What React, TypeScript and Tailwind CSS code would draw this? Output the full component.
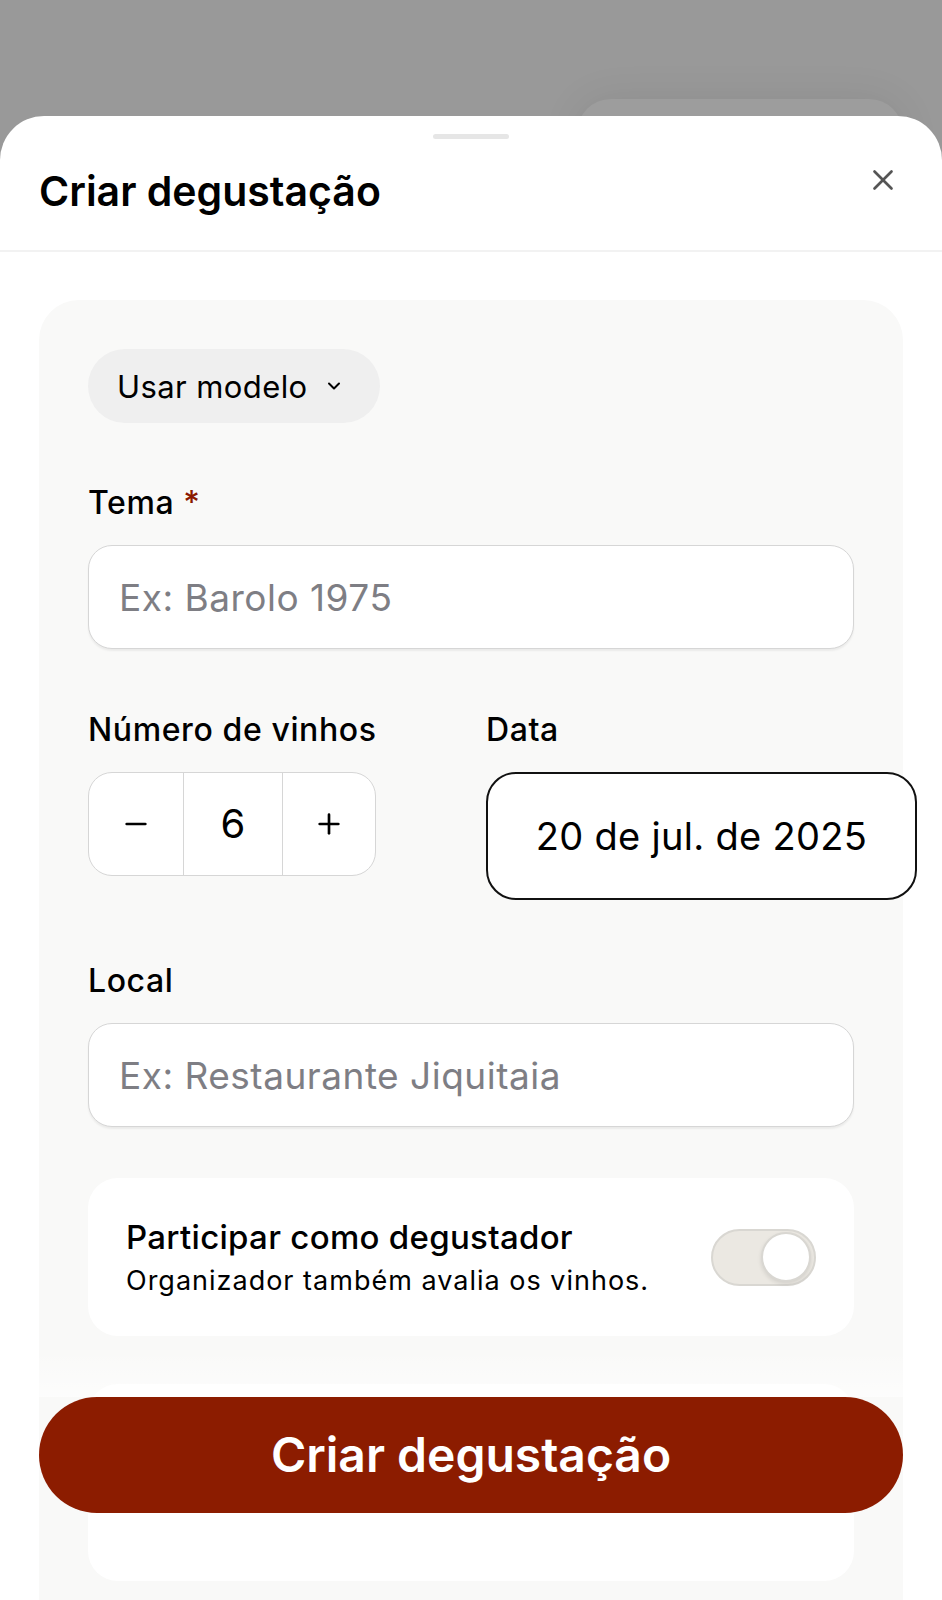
import { useState } from "react";
import { X, ChevronDown, Minus, Plus } from "lucide-react";

export default function App() {
    const [count, setCount] = useState(6);
    const [participate, setParticipate] = useState(true);

    return (
        <div className="relative w-full h-[1600px] overflow-hidden bg-[#999999] font-['Inter',sans-serif] text-black">
            {/* Card behind the sheet */}
            <div className="absolute left-[577px] top-[99px] w-[326px] h-[200px] rounded-[34px] bg-[#9d9d9d] shadow-[0_0_40px_rgba(0,0,0,0.08)]" />

            <div className="relative mt-[116px] h-[1484px] bg-white rounded-t-[44px] overflow-hidden">
                <div className="mx-auto mt-[18px] w-[76px] h-[5px] rounded-full bg-[#e6e6e6]" />

                {/* Header */}
                <div className="flex items-start justify-between pl-[39px] pr-[42px] h-[113px] border-b-2 border-[#f2f2f2]">
                    <h1 className="mt-[28px] text-[41px] leading-[48px] font-semibold">
                        Criar degustação
                    </h1>
                    <button className="mt-[24px] text-[#555555]">
                        <X className="w-[34px] h-[34px]" strokeWidth={1.9} />
                    </button>
                </div>

                {/* Form */}
                <div className="px-[39px] pt-[48px]">
                    <div className="bg-[#f9f9f8] rounded-[40px] px-[49px] pt-[49px] pb-[200px]">
                        <button className="flex items-center gap-[16px] h-[74px] pl-[29px] pr-[36px] rounded-full bg-[#efefef] text-[31px] tracking-[0.4px] leading-none">
                            Usar modelo
                            <ChevronDown className="w-[20px] h-[20px]" strokeWidth={2.4} />
                        </button>

                        <label className="block mt-[62px] text-[32px] tracking-[0.6px] leading-[36px] font-medium">
                            Tema <span className="text-[#8b1a00]">*</span>
                        </label>
                        <input
                            className="mt-[24px] w-full h-[104px] rounded-[24px] border-[1.5px] border-[#d6d6d6] bg-white px-[30px] text-[37px] tracking-[0.5px] placeholder:text-[#7e7e84] shadow-[0_2px_2px_rgba(0,0,0,0.06)] outline-none"
                            placeholder="Ex: Barolo 1975"
                        />

                        <div className="flex items-start gap-[110px] mt-[63px]">
                            <div className="w-[288px] shrink-0">
                                <div className="text-[32px] tracking-[0.6px] leading-[36px] font-medium whitespace-nowrap">Número de vinhos</div>
                                <div className="mt-[24px] flex h-[104px] rounded-[24px] border-[1.5px] border-[#d6d6d6] bg-white overflow-hidden">
                                    <button
                                        onClick={() => setCount(Math.max(1, count - 1))}
                                        className="w-[95px] flex items-center justify-center border-r-[1.5px] border-[#d6d6d6]"
                                    >
                                        <Minus className="w-[32px] h-[32px]" strokeWidth={2} />
                                    </button>
                                    <div className="w-[99px] flex items-center justify-center border-r-[1.5px] border-[#d6d6d6] text-[40px]">
                                        {count}
                                    </div>
                                    <button
                                        onClick={() => setCount(count + 1)}
                                        className="flex-1 flex items-center justify-center"
                                    >
                                        <Plus className="w-[32px] h-[32px]" strokeWidth={2} />
                                    </button>
                                </div>
                            </div>
                            <div className="shrink-0">
                                <div className="text-[32px] tracking-[0.6px] leading-[36px] font-medium">Data</div>
                                <div className="mt-[24px] w-[431px] h-[128px] rounded-[30px] border-2 border-[#111111] bg-white flex items-center justify-center text-[38px] tracking-[0.3px]">
                                    20 de jul. de 2025
                                </div>
                            </div>
                        </div>

                        <label className="block mt-[63px] text-[32px] tracking-[0.6px] leading-[36px] font-medium">Local</label>
                        <input
                            className="mt-[24px] w-full h-[104px] rounded-[24px] border-[1.5px] border-[#d6d6d6] bg-white px-[30px] text-[37px] tracking-[0.5px] placeholder:text-[#7e7e84] shadow-[0_2px_2px_rgba(0,0,0,0.06)] outline-none"
                            placeholder="Ex: Restaurante Jiquitaia"
                        />

                        {/* Participate toggle */}
                        <div className="mt-[51px] h-[158px] rounded-[30px] bg-white flex items-center justify-between pl-[38px] pr-[38px]">
                            <div>
                                <div className="text-[33px] tracking-[0.3px] leading-[40px] font-medium">Participar como degustador</div>
                                <div className="mt-[8px] text-[27px] tracking-[1px] leading-[32px]">Organizador também avalia os vinhos.</div>
                            </div>
                            <button
                                onClick={() => setParticipate(!participate)}
                                className="w-[105px] h-[57px] rounded-full bg-[#ebe8e2] border-2 border-[#d9d7d2] flex items-center p-[3px] justify-end"
                            >
                                <span className="w-[50px] h-[50px] rounded-full bg-white border-2 border-[#d9d7d2] shadow-[0_2px_4px_rgba(0,0,0,0.1)]" />
                            </button>
                        </div>

                        <div className="mt-[48px] h-[197px] rounded-[30px] bg-white" />
                    </div>
                </div>

                {/* Footer */}
                <div className="absolute left-[39px] right-[39px] top-[1235px] h-[46px] bg-gradient-to-b from-transparent to-white/60" />
                <button className="absolute left-[39px] right-[39px] top-[1281px] h-[116px] rounded-full bg-[#8c1c00] text-white text-[48px] font-semibold">
                    Criar degustação
                </button>
            </div>
        </div>
    );
}
